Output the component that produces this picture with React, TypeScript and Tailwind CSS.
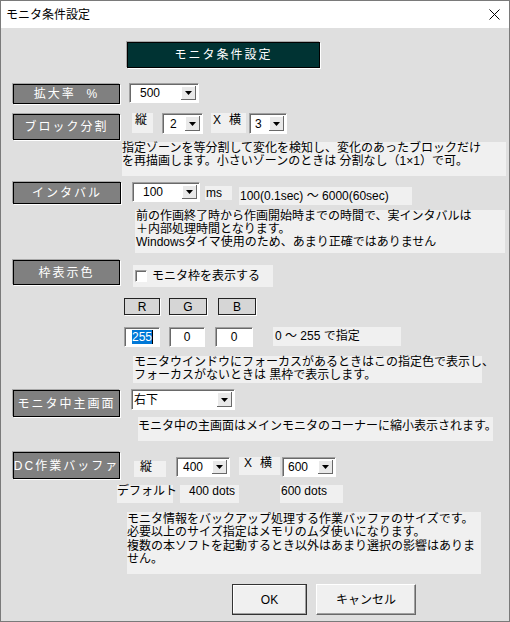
import React from "react";

const darkLabel =
  "bg-[#808080] border border-black text-white text-[12px] tracking-[2px] flex items-center justify-center whitespace-nowrap shadow-[1px_1px_0_#ffffff,-1px_-1px_0_#a8a8a8] leading-none";

function Arrow() {
  return (
    <div className="self-stretch my-[2px] mr-[2px] w-[15px] bg-[#e9e9e9] shadow-[inset_-1px_-1px_0_#696969,inset_1px_1px_0_#ffffff] flex items-center justify-center">
      <svg width="7" height="4" viewBox="0 0 7 4">
        <polygon points="0,0 7,0 3.5,4" fill="#000" />
      </svg>
    </div>
  );
}

function Combo({ value, className, textClass }: { value: string; className: string; textClass: string }) {
  return (
    <div
      className={`flex items-stretch bg-white border border-[#a0a0a0] border-r-white border-b-white shadow-[inset_1px_1px_0_#696969] ${className}`}
    >
      <div className={`flex-1 flex items-center text-[12px] leading-none ${textClass}`}>{value}</div>
      <Arrow />
    </div>
  );
}

function Field({ children, className }: { children: React.ReactNode; className: string }) {
  return (
    <div
      className={`flex items-center justify-center bg-white border border-[#a0a0a0] border-r-white border-b-white shadow-[inset_1px_1px_0_#696969] text-[12px] leading-none ${className}`}
    >
      {children}
    </div>
  );
}

const light = "bg-[#f0f0f0]";

export default function App() {
  return (
    <div className="w-[510px] h-[622px] border border-[#7a7a7a] bg-[#dfdfdf] text-black overflow-hidden flex flex-col font-['Liberation_Sans','Noto_Sans_CJK_JP',sans-serif]">
      {/* title bar */}
      <div className="h-[27px] shrink-0 bg-white flex items-center justify-between pl-[5px] pr-[9px]">
        <span className="text-[12px] leading-none">モニタ条件設定</span>
        <svg width="11" height="11" viewBox="0 0 11 11">
          <path d="M0.5 0.5 L10.5 10.5 M10.5 0.5 L0.5 10.5" stroke="#000" strokeWidth="1" />
        </svg>
      </div>

      {/* header banner */}
      <div className="flex mt-[14px]">
        <div className="ml-[126px] w-[193px] h-[26px] bg-[#003333] border border-black shadow-[1px_1px_0_#ffffff,-1px_-1px_0_#a8a8a8] text-white text-[12px] tracking-[2px] flex items-center justify-center leading-none">
          モニタ条件設定
        </div>
      </div>

      {/* 拡大率 */}
      <div className="flex items-start mt-[15px]">
        <div className={`${darkLabel} ml-[12px] mt-[1px] w-[107px] h-[20px]`}>拡大率&nbsp;&nbsp;%</div>
        <Combo value="500" className="ml-[9px] w-[70px] h-[20px]" textClass="pl-[10px]" />
      </div>

      {/* ブロック分割 */}
      <div className="flex items-start mt-[9px]">
        <div className={`${darkLabel} ml-[12px] mt-[1px] w-[107px] h-[26px]`}>ブロック分割</div>
        <div className={`${light} ml-[12px] w-[21px] h-[20px] text-[12px] leading-[13px] pt-[1px] pl-[3px]`}>縦</div>
        <Combo value="2" className="ml-[9px] w-[41px] h-[21px]" textClass="pl-[7px]" />
        <div className={`${light} ml-[8px] w-[35px] h-[20px] text-[12px] leading-[13px] pt-[1px] pl-[2px] flex`}>
          <span>X</span>
          <span className="ml-[8px]">横</span>
        </div>
        <Combo value="3" className="ml-[3px] w-[38px] h-[21px]" textClass="pl-[5px]" />
      </div>

      <div className="flex mt-[2px]">
        <div className={`${light} ml-[121px] w-[384px] h-[34px] text-[12px] leading-[13px] whitespace-nowrap`}>
          <div>指定ゾーンを等分割して変化を検知し、変化のあったブロックだけ</div>
          <div>を再描画します。小さいゾーンのときは 分割なし（1×1）で可。</div>
        </div>
      </div>

      {/* インタバル */}
      <div className="flex items-start mt-[6px]">
        <div className={`${darkLabel} ml-[12px] w-[108px] h-[22px]`}>インタバル</div>
        <Combo value="100" className="ml-[11px] w-[68px] h-[20px]" textClass="pl-[10px]" />
        <div className={`${light} ml-[5px] mt-[4px] w-[27px] h-[14px] text-[12px] leading-[14px] pl-[1px]`}>ms</div>
        <div className={`${light} ml-[7px] mt-[5px] w-[173px] h-[18px] text-[12px] leading-[18px] pl-[1px] whitespace-nowrap`}>
          100(0.1sec) 〜 6000(60sec)
        </div>
      </div>

      <div className="flex mt-[5px]">
        <div className={`${light} ml-[134px] w-[370px] h-[43px] text-[12px] leading-[13px] whitespace-nowrap pl-[1px]`}>
          <div>前の作画終了時から作画開始時までの時間で、実インタバルは</div>
          <div>＋内部処理時間となります。</div>
          <div>Windowsタイマ使用のため、あまり正確ではありません</div>
        </div>
      </div>

      {/* 枠表示色 */}
      <div className="flex items-start mt-[7px]">
        <div className={`${darkLabel} ml-[12px] w-[107px] h-[25px]`}>枠表示色</div>
        <div className={`${light} ml-[13px] mt-[5px] w-[140px] h-[22px] flex items-center`}>
          <div className="ml-[2px] w-[12px] h-[12px] bg-white border border-[#a0a0a0] border-r-white border-b-white shadow-[inset_1px_1px_0_#696969]" />
          <span className="ml-[5px] text-[12px] leading-none whitespace-nowrap">モニタ枠を表示する</span>
        </div>
      </div>

      {/* RGB */}
      <div className="flex items-start mt-[11px]">
        <div className="ml-[123px] w-[36px] h-[17px] bg-[#d6d6d6] border border-[#222] shadow-[1px_1px_0_#ffffff] flex items-center justify-center text-[12px] leading-none">R</div>
        <div className="ml-[9px] w-[38px] h-[17px] bg-[#d6d6d6] border border-[#222] shadow-[1px_1px_0_#ffffff] flex items-center justify-center text-[12px] leading-none">G</div>
        <div className="ml-[11px] w-[38px] h-[17px] bg-[#d6d6d6] border border-[#222] shadow-[1px_1px_0_#ffffff] flex items-center justify-center text-[12px] leading-none">B</div>
      </div>

      <div className="flex items-start mt-[12px]">
        <Field className="ml-[123px] w-[36px] h-[20px] justify-start pl-[7px]">
          <span className="bg-[#0078d7] text-white px-[0px] leading-[14px]">255</span>
          <span className="w-[1px] h-[14px] bg-black" />
        </Field>
        <Field className="ml-[9px] w-[36px] h-[20px]">0</Field>
        <Field className="ml-[10px] w-[38px] h-[20px]">0</Field>
        <div className={`${light} ml-[20px] w-[128px] h-[19px] text-[12px] leading-[19px] pl-[2px] whitespace-nowrap`}>
          0 〜 255 で指定
        </div>
      </div>

      <div className="flex mt-[9px]">
        <div className={`${light} ml-[132px] w-[349px] h-[27px] text-[12px] leading-[13px] whitespace-nowrap pl-[1px]`}>
          <div>モニタウインドウにフォーカスがあるときはこの指定色で表示し、</div>
          <div>フォーカスがないときは 黒枠で表示します。</div>
        </div>
      </div>

      {/* モニタ中主画面 */}
      <div className="flex items-start mt-[6px]">
        <div className={`${darkLabel} ml-[12px] mt-[1px] w-[107px] h-[27px]`}>モニタ中主画面</div>
        <Combo value="右下" className="ml-[11px] w-[104px] h-[21px]" textClass="pl-[2px]" />
      </div>

      <div className="flex">
        <div className={`${light} ml-[137px] w-[355px] h-[24px] text-[12px] leading-[13px] whitespace-nowrap pt-[3px]`}>
          モニタ中の主画面はメインモニタのコーナーに縮小表示されます。
        </div>
      </div>

      {/* DC作業バッファ */}
      <div className="flex items-start mt-[11px]">
        <div className={`${darkLabel} ml-[12px] w-[107px] h-[27px] tracking-[1px]`}>DC作業バッファ</div>
        <div className={`${light} ml-[14px] mt-[9px] w-[32px] h-[16px] text-[12px] leading-[13px] pl-[6px]`}>縦</div>
        <Combo value="400" className="ml-[10px] mt-[5px] w-[54px] h-[20px]" textClass="pl-[6px]" />
        <div className={`${light} ml-[9px] mt-[5px] w-[41px] h-[18px] text-[12px] leading-[13px] pl-[5px] flex`}>
          <span>X</span>
          <span className="ml-[8px]">横</span>
        </div>
        <Combo value="600" className="ml-[2px] mt-[5px] w-[54px] h-[20px]" textClass="pl-[5px]" />
      </div>

      <div className="flex items-start mt-[6px]">
        <div className={`${light} ml-[116px] w-[56px] h-[18px] text-[12px] leading-[13px] whitespace-nowrap`}>デフォルト</div>
        <div className={`${light} ml-[7px] w-[59px] h-[18px] text-[12px] leading-[13px] pl-[9px] whitespace-nowrap`}>400 dots</div>
        <div className={`${light} ml-[41px] w-[63px] h-[18px] text-[12px] leading-[13px] pl-[1px] whitespace-nowrap`}>600 dots</div>
      </div>

      <div className="flex mt-[9px]">
        <div className={`${light} ml-[126px] w-[354px] h-[62px] text-[12px] leading-[13.4px] whitespace-nowrap pt-[1px]`}>
          <div>モニタ情報をバックアップ処理する作業バッファのサイズです。</div>
          <div>必要以上のサイズ指定はメモリのムダ使いになります。</div>
          <div>複数の本ソフトを起動するとき以外はあまり選択の影響はありま</div>
          <div>せん。</div>
        </div>
      </div>

      {/* buttons */}
      <div className="flex items-start mt-[10px]">
        <div className="ml-[231px] w-[75px] h-[31px] bg-[#f0f0f0] border border-[#333] shadow-[inset_-1px_-1px_0_#a0a0a0,inset_1px_1px_0_#ffffff] flex items-center justify-center text-[12px] leading-none">
          OK
        </div>
        <div className="ml-[9px] w-[100px] h-[31px] bg-[#f0f0f0] border border-white border-r-[#696969] border-b-[#696969] shadow-[inset_-1px_-1px_0_#a0a0a0] flex items-center justify-center text-[12px] leading-none">
          キャンセル
        </div>
      </div>
    </div>
  );
}
